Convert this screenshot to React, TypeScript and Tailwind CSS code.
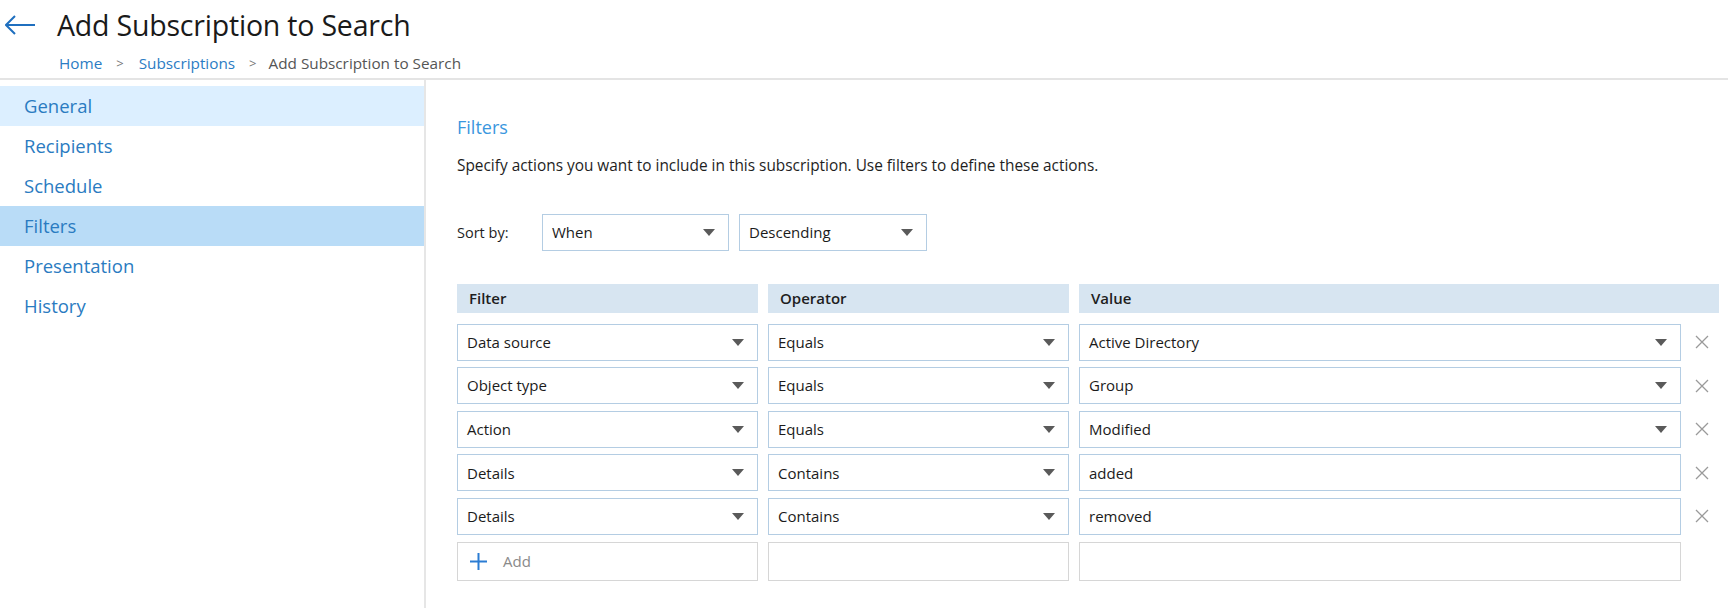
import React from 'react';

const navItems = ['General', 'Recipients', 'Schedule', 'Filters', 'Presentation', 'History'];

const rows: { filter: string; operator: string; value: string; valueSelect: boolean }[] = [
  { filter: 'Data source', operator: 'Equals', value: 'Active Directory', valueSelect: true },
  { filter: 'Object type', operator: 'Equals', value: 'Group', valueSelect: true },
  { filter: 'Action', operator: 'Equals', value: 'Modified', valueSelect: true },
  { filter: 'Details', operator: 'Contains', value: 'added', valueSelect: false },
  { filter: 'Details', operator: 'Contains', value: 'removed', valueSelect: false },
];

const Caret = () => (
  <svg width="12" height="7" viewBox="0 0 12 7" className="shrink-0">
    <path d="M0 0 L12 0 L6 7 Z" fill="#5a5a5a" />
  </svg>
);

const Select: React.FC<{ label: string; className?: string }> = ({ label, className }) => (
  <div
    className={`flex items-center justify-between border border-[#b4cde3] bg-white pl-[9px] pr-[13px] text-[15px] text-[#1b1b1b] ${className ?? ''}`}
  >
    <span>{label}</span>
    <Caret />
  </div>
);

const Field: React.FC<{ label: string }> = ({ label }) => (
  <div className="flex h-[37px] items-center border border-[#b4cde3] bg-white pl-[9px] text-[15px] text-[#1b1b1b]">
    {label}
  </div>
);

const CloseIcon = () => (
  <svg width="14" height="14" viewBox="0 0 14 14">
    <path d="M1 1 L13 13 M13 1 L1 13" stroke="#9a9a9a" strokeWidth="1.3" />
  </svg>
);

const App: React.FC = () => {
  return (
    <div
      className="h-[608px] w-[1728px] overflow-hidden bg-white"
      style={{ fontFamily: '"Open Sans", "Noto Sans", sans-serif' }}
    >
      {/* header */}
      <div className="h-[80px] border-b-2 border-[#e4e4e4] pt-[7px]">
        <div className="flex h-[36px] items-center">
          <div className="ml-[5px] w-[52px]">
            <svg width="31" height="20" viewBox="0 0 31 20">
              <path d="M1 10 L30 10 M10 1 L1 10 L10 19" stroke="#1f6fbf" strokeWidth="2" fill="none" />
            </svg>
          </div>
          <h1 className="text-[28.5px] font-normal tracking-[-0.2px] text-[#1a1a1a]">Add Subscription to Search</h1>
        </div>
        <div className="mt-[9px] flex items-center pl-[59px] text-[15.3px]">
          <span className="text-[#2b7cc4]">Home</span>
          <span className="ml-[14px] mr-[15px] text-[13px] text-[#777]">&gt;</span>
          <span className="text-[#2b7cc4]">Subscriptions</span>
          <span className="ml-[14px] mr-[12px] text-[13px] text-[#777]">&gt;</span>
          <span className="text-[#555]">Add Subscription to Search</span>
        </div>
      </div>

      <div className="flex h-[528px]">
        {/* sidebar */}
        <div className="w-[426px] shrink-0 border-r-2 border-[#e6e6e6] pt-[6px]">
          {navItems.map((item) => (
            <div
              key={item}
              className={`flex h-[40px] items-center pl-[24px] text-[18.5px] text-[#2a7bc1] ${
                item === 'General' ? 'bg-[#dcefff]' : item === 'Filters' ? 'bg-[#b9dcf7]' : ''
              }`}
            >
              {item}
            </div>
          ))}
        </div>

        {/* main */}
        <div className="flex-1 pl-[31px] pt-[35px]">
          <h2 className="h-[24px] text-[18px] leading-[24px] text-[#3a97de]">Filters</h2>
          <p className="mt-[17px] h-[20px] text-[15.4px] leading-[20px] text-[#1e1e1e]">
            Specify actions you want to include in this subscription. Use filters to define these actions.
          </p>

          <div className="mt-[38px] flex items-center">
            <span className="w-[85px] text-[14.5px] text-[#1e1e1e]">Sort by:</span>
            <Select label="When" className="h-[37px] w-[187px]" />
            <Select label="Descending" className="ml-[10px] h-[37px] w-[188px]" />
          </div>

          <div className="mt-[33px] grid grid-cols-[301px_301px_602px_28px] gap-x-[10px] gap-y-[6.6px]">
            <div className="mb-[4px] flex h-[29px] items-center bg-[#d7e5f1] pl-[12px] text-[15px] font-semibold text-[#1e1e1e]">
              Filter
            </div>
            <div className="mb-[4px] flex h-[29px] items-center bg-[#d7e5f1] pl-[12px] text-[15px] font-semibold text-[#1e1e1e]">
              Operator
            </div>
            <div className="col-span-2 mb-[4px] flex h-[29px] items-center bg-[#d7e5f1] pl-[12px] text-[15px] font-semibold text-[#1e1e1e]">
              Value
            </div>

            {rows.map((row, i) => (
              <React.Fragment key={i}>
                <Select label={row.filter} className="h-[37px]" />
                <Select label={row.operator} className="h-[37px]" />
                {row.valueSelect ? <Select label={row.value} className="h-[37px]" /> : <Field label={row.value} />}
                <div className="flex items-center justify-center pr-[6px]">
                  <CloseIcon />
                </div>
              </React.Fragment>
            ))}

            <div className="flex h-[39px] items-center border border-[#d6d6d6] pl-[11px] text-[15px] text-[#8a8a8a]">
              <svg width="19" height="19" viewBox="0 0 19 19" className="mr-[15px]">
                <path d="M9.5 1 L9.5 18 M1 9.5 L18 9.5" stroke="#2b7cd3" strokeWidth="2" />
              </svg>
              Add
            </div>
            <div className="h-[39px] border border-[#d6d6d6]" />
            <div className="h-[39px] border border-[#d6d6d6]" />
            <div />
          </div>
        </div>
      </div>
    </div>
  );
};

export default App;
